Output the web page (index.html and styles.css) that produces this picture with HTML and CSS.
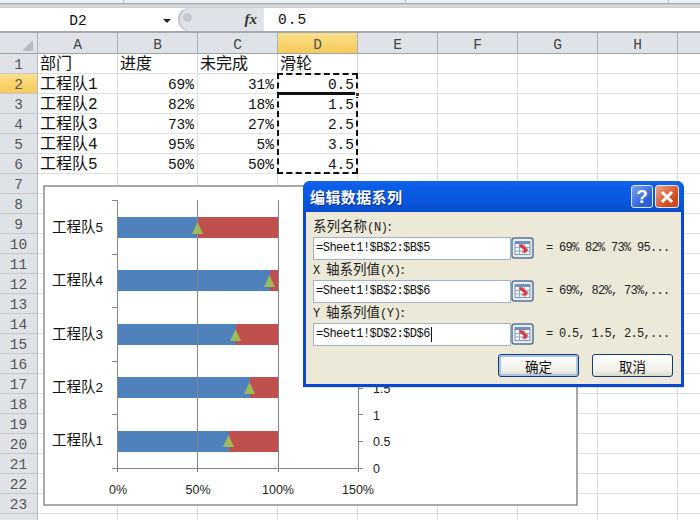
FILE: index.html
```html
<!DOCTYPE html>
<html lang="zh">
<head>
<meta charset="utf-8">
<title>编辑数据系列</title>
<link rel="stylesheet" href="styles.css">
</head>
<body>
<div class="app">
  <div class="ribbon-edge"><span class="edge-a"></span><span class="edge-b"></span><span class="edge-c"></span></div>
  <div class="formula-bar">
    <div class="name-box"><span class="name-text">D2</span><span class="name-arrow"></span></div>
    <div class="fx-pill"><span class="pill-knob"></span><span class="fx">fx</span></div>
    <div class="formula-input">0.5</div>
  </div>
  <div class="sheet">
    <table class="grid">
      <thead>
        <tr><th class="corner"><span class="corner-mark"></span></th><th>A</th><th>B</th><th>C</th><th class="active">D</th><th>E</th><th>F</th><th>G</th><th>H</th><th></th></tr>
      </thead>
      <tbody>
        <tr><th>1</th><td>部门</td><td>进度</td><td>未完成</td><td>滑轮</td><td></td><td></td><td></td><td></td><td></td></tr>
        <tr><th class="active">2</th><td>工程队1</td><td class="num">69%</td><td class="num">31%</td><td class="num">0.5</td><td></td><td></td><td></td><td></td><td></td></tr>
        <tr><th>3</th><td>工程队2</td><td class="num">82%</td><td class="num">18%</td><td class="num">1.5</td><td></td><td></td><td></td><td></td><td></td></tr>
        <tr><th>4</th><td>工程队3</td><td class="num">73%</td><td class="num">27%</td><td class="num">2.5</td><td></td><td></td><td></td><td></td><td></td></tr>
        <tr><th>5</th><td>工程队4</td><td class="num">95%</td><td class="num">5%</td><td class="num">3.5</td><td></td><td></td><td></td><td></td><td></td></tr>
        <tr><th>6</th><td>工程队5</td><td class="num">50%</td><td class="num">50%</td><td class="num">4.5</td><td></td><td></td><td></td><td></td><td></td></tr>
        <tr><th>7</th><td></td><td></td><td></td><td></td><td></td><td></td><td></td><td></td><td></td></tr>
        <tr><th>8</th><td></td><td></td><td></td><td></td><td></td><td></td><td></td><td></td><td></td></tr>
        <tr><th>9</th><td></td><td></td><td></td><td></td><td></td><td></td><td></td><td></td><td></td></tr>
        <tr><th>10</th><td></td><td></td><td></td><td></td><td></td><td></td><td></td><td></td><td></td></tr>
        <tr><th>11</th><td></td><td></td><td></td><td></td><td></td><td></td><td></td><td></td><td></td></tr>
        <tr><th>12</th><td></td><td></td><td></td><td></td><td></td><td></td><td></td><td></td><td></td></tr>
        <tr><th>13</th><td></td><td></td><td></td><td></td><td></td><td></td><td></td><td></td><td></td></tr>
        <tr><th>14</th><td></td><td></td><td></td><td></td><td></td><td></td><td></td><td></td><td></td></tr>
        <tr><th>15</th><td></td><td></td><td></td><td></td><td></td><td></td><td></td><td></td><td></td></tr>
        <tr><th>16</th><td></td><td></td><td></td><td></td><td></td><td></td><td></td><td></td><td></td></tr>
        <tr><th>17</th><td></td><td></td><td></td><td></td><td></td><td></td><td></td><td></td><td></td></tr>
        <tr><th>18</th><td></td><td></td><td></td><td></td><td></td><td></td><td></td><td></td><td></td></tr>
        <tr><th>19</th><td></td><td></td><td></td><td></td><td></td><td></td><td></td><td></td><td></td></tr>
        <tr><th>20</th><td></td><td></td><td></td><td></td><td></td><td></td><td></td><td></td><td></td></tr>
        <tr><th>21</th><td></td><td></td><td></td><td></td><td></td><td></td><td></td><td></td><td></td></tr>
        <tr><th>22</th><td></td><td></td><td></td><td></td><td></td><td></td><td></td><td></td><td></td></tr>
        <tr><th>23</th><td></td><td></td><td></td><td></td><td></td><td></td><td></td><td></td><td></td></tr>
        <tr><th></th><td></td><td></td><td></td><td></td><td></td><td></td><td></td><td></td><td></td></tr>
      </tbody>
    </table>
  </div>

  <div class="marching-ants"></div>
  <div class="active-cell-line"></div>
  <div class="fill-handle"></div>

  <svg class="chart" width="535" height="321" viewBox="43 185 535 321">
    <rect class="chart-bg" x="44" y="186" width="533" height="319"/>
    <g class="c-blue">
      <rect x="118" y="217" width="80" height="21"/>
      <rect x="118" y="270" width="152" height="21"/>
      <rect x="118" y="324" width="118" height="21"/>
      <rect x="118" y="377" width="132" height="21"/>
      <rect x="118" y="431" width="111" height="21"/>
    </g>
    <g class="c-red">
      <rect x="198" y="217" width="80" height="21"/>
      <rect x="270" y="270" width="8" height="21"/>
      <rect x="236" y="324" width="42" height="21"/>
      <rect x="250" y="377" width="28" height="21"/>
      <rect x="229" y="431" width="49" height="21"/>
    </g>
    <g class="c-line">
      <path d="M117.5 200V472M197.5 200V472M278.5 200V472M358.5 200V472M112 468.5H358M112 200.500H117M112 254.500H117M112 307.500H117M112 361.500H117M112 414.500H117M358 441.500H363M358 414.500H363M358 388.500H363M358 468.500H363"/>
    </g>
    <g class="c-green">
      <path d="M197.500 222L203 234H192Z"/>
      <path d="M269.500 275L275 287H264Z"/>
      <path d="M235.500 329L241 341H230Z"/>
      <path d="M249.500 382L255 394H244Z"/>
      <path d="M228.500 435L234 447H223Z"/>
    </g>
    <g class="c-cat">
      <text x="52" y="232">工程队<tspan class="c-digit">5</tspan></text>
      <text x="52" y="285">工程队<tspan class="c-digit">4</tspan></text>
      <text x="52" y="339">工程队<tspan class="c-digit">3</tspan></text>
      <text x="52" y="392">工程队<tspan class="c-digit">2</tspan></text>
      <text x="52" y="445">工程队<tspan class="c-digit">1</tspan></text>
    </g>
    <g class="c-val">
      <text x="118" y="494" text-anchor="middle">0%</text>
      <text x="198" y="494" text-anchor="middle">50%</text>
      <text x="278" y="494" text-anchor="middle">100%</text>
      <text x="358" y="494" text-anchor="middle">150%</text>
      <text x="373" y="473">0</text>
      <text x="373" y="446">0.5</text>
      <text x="373" y="420">1</text>
      <text x="373" y="393">1.5</text>
    </g>
  </svg>

  <div class="dialog">
    <div class="title-bar">
      <span class="title-text">编辑数据系列</span>
      <span class="title-buttons">
        <span class="btn-help">?</span>
        <span class="btn-close"><svg width="14" height="14" viewBox="0 0 14 14"><path d="M2 2L12 12M12 2L2 12"/></svg></span>
      </span>
    </div>
    <div class="dialog-body">
      <div class="field-label">系列名称<span class="mono">(N)</span>:</div>
      <div class="field">
        <div class="field-input">=Sheet1!$B$2:$B$5</div>
        <span class="ref-btn"><svg width="23" height="22" viewBox="0 0 23 22"><use href="#ref-icon"/></svg></span>
        <span class="preview">= 69% 82% 73% 95...</span>
      </div>
      <div class="field-label"><span class="mono axis">X</span>轴系列值<span class="mono">(X)</span>:</div>
      <div class="field">
        <div class="field-input">=Sheet1!$B$2:$B$6</div>
        <span class="ref-btn"><svg width="23" height="22" viewBox="0 0 23 22"><use href="#ref-icon"/></svg></span>
        <span class="preview">= 69%, 82%, 73%,...</span>
      </div>
      <div class="field-label"><span class="mono axis">Y</span>轴系列值<span class="mono">(Y)</span>:</div>
      <div class="field">
        <div class="field-input">=Sheet1!$D$2:$D$6<span class="caret"></span></div>
        <span class="ref-btn"><svg width="23" height="22" viewBox="0 0 23 22"><use href="#ref-icon"/></svg></span>
        <span class="preview">= 0.5, 1.5, 2.5,...</span>
      </div>
      <div class="dialog-actions">
        <span class="push-btn default">确定</span>
        <span class="push-btn">取消</span>
      </div>
    </div>
  </div>

  <svg class="defs" width="0" height="0">
    <symbol id="ref-icon" viewBox="0 0 23 22">
      <rect x="1" y="1" width="21" height="20" rx="2.500" fill="#e9ecee" stroke="#55769a" stroke-width="1.500"/>
      <rect x="4" y="4.500" width="15" height="13" fill="#f4f6f8" stroke="#7d97b8"/>
      <rect x="4" y="4.500" width="15" height="2.500" fill="#6f90bd"/>
      <path d="M4 10.500H19M4 14H19M8.500 7V17.500M13.500 7V17.500" stroke="#8fa8c8" stroke-width="1" fill="none"/>
      <path d="M8.500 7.500L11 7L17 12.500L15.500 15.500H10.500L13 13L8 9Z" fill="#dc3a40"/>
    </symbol>
  </svg>
</div>
</body>
</html>
```

FILE: styles.css
```css
* { box-sizing: border-box; }
html, body { margin: 0; padding: 0; background: #fff; }
.app {
  position: relative;
  width: 700px;
  height: 520px;
  overflow: hidden;
  display: flex;
  flex-direction: column;
  font-family: "Liberation Mono", "Noto Sans CJK SC", monospace;
  color: #111;
}

/* top strip */
.ribbon-edge {
  height: 8px;
  flex: none;
  display: flex;
  background: linear-gradient(#eceef0 0, #eceef0 3px, #a8adb3 3px, #a8adb3 4px, #dde0e4 5px, #c9cdd2 8px);
}
.edge-a { width: 124px; border-right: 1px solid #b8bcc2; height: 4px; }
.edge-b { width: 282px; border-right: 1px solid #b8bcc2; height: 4px; }
.edge-c { width: 263px; border-right: 1px solid #b8bcc2; height: 4px; }

/* formula bar */
.formula-bar {
  height: 23px;
  flex: none;
  display: flex;
  background: #fff;
}
.name-box {
  width: 178px;
  display: flex;
  align-items: center;
  padding-top: 2px;
  font-size: 14.500px;
}
.name-text { width: 156px; text-align: center; }
.name-arrow {
  width: 0;
  height: 0;
  margin-left: 7px;
  border-left: 4px solid transparent;
  border-right: 4px solid transparent;
  border-top: 4px solid #222;
}
.fx-pill {
  width: 85px;
  display: flex;
  align-items: center;
  justify-content: space-between;
  padding: 0 6px 0 5px;
  background: #dfe3e8;
  border-radius: 12px 0 0 12px;
  box-shadow: inset 2px 0 0 #bfc4ca;
}
.pill-knob {
  width: 9px;
  height: 9px;
  margin-top: -5px;
  border-radius: 50%;
  background: #c3c8cf;
}
.fx {
  font-family: "Liberation Serif", serif;
  font-style: italic;
  font-weight: 700;
  font-size: 15px;
  color: #333;
}
.formula-input {
  flex: 1;
  padding: 1px 0 0 14px;
  font-size: 14.500px;
  line-height: 22px;
  letter-spacing: 1px;
  border-left: 1px solid #e4e6e8;
}

/* sheet */
.sheet {
  flex: 1;
  min-height: 0;
  border-top: 2px solid #a3a8ae;
  background: #fff;
}
.grid {
  border-collapse: separate;
  border-spacing: 0;
  table-layout: fixed;
  width: 758px;
  font-size: 14.500px;
}
.grid th, .grid td {
  width: 80px;
  height: 20px;
  padding: 0;
  font-weight: 400;
  white-space: nowrap;
  overflow: hidden;
  line-height: 16px;
}
.grid thead th {
  height: 21px;
  padding-top: 3px;
  background: #dfe3e8;
  color: #444;
  text-align: center;
  border-right: 1px solid #acb2b9;
  border-bottom: 1px solid #9da3aa;
}
.grid thead th.corner { width: 38px; padding-top: 0; }
.corner-mark {
  display: block;
  width: 0;
  height: 0;
  margin: 4px 4px 0 auto;
  border-left: 11px solid transparent;
  border-bottom: 11px solid #b6bbc1;
}
.grid tbody th {
  width: 38px;
  padding-top: 3px;
  background: #dfe3e8;
  color: #555;
  text-align: center;
  border-right: 1px solid #b6bbc1;
  border-bottom: 1px solid #c2c7cc;
}
.grid thead th.active, .grid tbody th.active {
  background: linear-gradient(#fbe08a, #f7c958);
  color: #555;
}
.grid td {
  font-family: "Liberation Mono", "Noto Sans CJK SC", monospace;
  font-size: 16px;
  padding: 2px 0 0 2px;
  border-right: 1px solid #dcdcdc;
  border-bottom: 1px solid #e2e2e2;
}
.grid td.num {
  font-size: 14.500px;
  text-align: right;
  padding: 3px 3px 0 0;
}

/* selection overlays */
.marching-ants {
  position: absolute;
  left: 277px;
  top: 73px;
  width: 81px;
  height: 101px;
  border: 2px dashed #111;
}
.active-cell-line {
  position: absolute;
  left: 279px;
  top: 92px;
  width: 77px;
  height: 3px;
  background: #111;
}
.fill-handle {
  position: absolute;
  left: 355px;
  top: 92px;
  width: 5px;
  height: 5px;
  background: #333;
  border: 1px solid #fff;
}

/* chart */
.chart {
  position: absolute;
  left: 43px;
  top: 185px;
}
.chart-bg { fill: #fff; stroke: #8c8c8c; stroke-width: 1.500; }
.c-blue { fill: #4f81bd; }
.c-red { fill: #c0504d; }
.c-green { fill: #9bbb59; }
.c-line path { fill: none; stroke: #868686; stroke-width: 1; }
.c-cat { font-family: "Noto Sans CJK SC", sans-serif; font-size: 14.500px; fill: #111; }
.c-digit { font-family: "Liberation Sans", sans-serif; font-size: 13.500px; }
.c-val { font-family: "Liberation Sans", sans-serif; font-size: 12.500px; fill: #222; }

/* dialog */
.dialog {
  position: absolute;
  left: 303px;
  top: 181px;
  width: 381px;
  height: 206px;
  display: flex;
  flex-direction: column;
  padding: 0 3px 3px;
  background: #0a47d0;
  border-radius: 7px 7px 0 0;
  box-shadow: 0 1px 1px rgba(0, 0, 0, .15);
}
.title-bar {
  height: 31px;
  flex: none;
  margin: 0 -3px;
  padding: 0 5px 0 7px;
  display: flex;
  align-items: center;
  justify-content: space-between;
  border-radius: 7px 7px 0 0;
  background: linear-gradient(#1565e6 0, #0a5ee8 5px, #0858e0 60%, #0a4ccc 100%);
}
.title-text {
  font-family: "Noto Sans CJK SC", sans-serif;
  font-weight: 700;
  font-size: 15px;
  letter-spacing: .4px;
  color: #fff;
  text-shadow: 1px 1px 0 #0a2e8c;
}
.title-buttons { display: flex; gap: 2px; }
.btn-help, .btn-close {
  height: 23px;
  display: flex;
  align-items: center;
  justify-content: center;
  border: 1px solid #dfe8f8;
  border-radius: 3px;
}
.btn-help {
  width: 22px;
  background: linear-gradient(135deg, #7fa4ee, #2a5fd8 70%);
  color: #fff;
  font-family: "Liberation Sans", sans-serif;
  font-weight: 700;
  font-size: 19px;
}
.btn-close { width: 24px; background: linear-gradient(135deg, #f0a080, #d24a20 70%); }
.btn-close path { fill: none; stroke: #fff; stroke-width: 3; }
.dialog-body {
  flex: 1;
  background: #ece9d8;
  padding: 5px 7px 0 7px;
  display: flex;
  flex-direction: column;
}
.field-label {
  height: 19px;
  line-height: 17px;
  font-family: "Noto Sans CJK SC", sans-serif;
  font-size: 13.500px;
  color: #222;
}
.mono { font-family: "Liberation Mono", monospace; font-size: 12px; letter-spacing: -.3px; }
.axis { margin-right: 6px; }
.field {
  height: 24px;
  display: flex;
  align-items: center;
}
.field-input {
  width: 198px;
  height: 23px;
  padding-left: 2px;
  line-height: 22px;
  background: #fff;
  border: 1px solid #9fb2c6;
  font-family: "Liberation Mono", monospace;
  font-size: 12px;
  letter-spacing: -.5px;
  color: #111;
  display: flex;
  align-items: center;
}
.caret { width: 1px; height: 15px; margin-left: 1px; background: #111; }
.ref-btn { width: 23px; height: 22px; display: flex; }
.preview {
  margin-left: 12px;
  font-family: "Liberation Mono", monospace;
  font-size: 12px;
  letter-spacing: -.7px;
  white-space: nowrap;
  color: #222;
}
.dialog-actions {
  display: flex;
  justify-content: flex-end;
  gap: 13px;
  margin-top: 8px;
  padding-right: 1px;
}
.push-btn {
  width: 81px;
  height: 23px;
  display: flex;
  align-items: center;
  justify-content: center;
  font-family: "Noto Sans CJK SC", sans-serif;
  font-size: 13.500px;
  color: #111;
  background: linear-gradient(#ffffff, #f2f1ea 70%, #dcd9cb);
  border: 1px solid #143c78;
  border-radius: 3px;
}
.push-btn.default { box-shadow: inset 0 0 0 2px #a9c4e8; }
.defs { position: absolute; }
```
